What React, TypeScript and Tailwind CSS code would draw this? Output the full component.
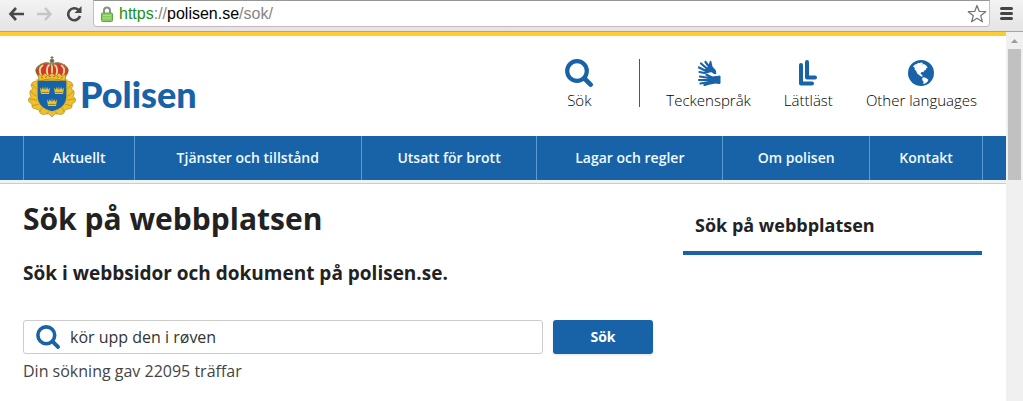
import { useState, type ReactNode } from "react";

function SearchIcon({ className }: { className: string }) {
  return (
    <svg viewBox="0 0 28 28" className={className} fill="none" stroke="#1862a8" aria-hidden="true">
      <circle cx="12" cy="12" r="9.8" strokeWidth="4.2" />
      <path d="M19.5 19.5 25.6 25.6" strokeWidth="4.6" strokeLinecap="round" />
    </svg>
  );
}

function HandsIcon() {
  return (
    <svg viewBox="0 0 24 26" className="h-[26px] w-6" fill="none" stroke="#1862a8" strokeLinecap="round" strokeLinejoin="round" aria-hidden="true">
      <path d="M8.500 2 13 8M4 3.500 11 9.500M2 7.500 10 11.500M2.500 12 10 13.500" strokeWidth="2.200" />
      <path d="M13.500 1.500 14.800 7 18 10.500 18.500 13.500 12 12.500 9 13.500 8.500 10 12 7Z" fill="#1862a8" strokeWidth="1.600" />
      <path d="M9 15.200 14 13.800 17 16" stroke="#fff" strokeWidth="3.200" />
      <path d="M9.500 14.800 15 17.500M3 16.500 12 18M2 20 12 20M3.500 23.500 12 22M7.500 25 14 23" strokeWidth="2.200" />
      <path d="M12 16.800 16 17 23 16V23.500L18 23 13 24 11.500 22Z" fill="#1862a8" strokeWidth="1" />
    </svg>
  );
}

function EasyReadIcon() {
  return (
    <svg viewBox="0 0 20 28" className="h-7 w-5" fill="none" stroke="#1862a8" strokeWidth="4" strokeLinejoin="round" strokeLinecap="round" aria-hidden="true">
      <path d="M3 6V24.500H14" />
      <path d="M9 3V18.500H17" />
    </svg>
  );
}

function GlobeIcon() {
  return (
    <svg viewBox="0 0 26 26" className="size-[26px]" aria-hidden="true">
      <circle cx="13" cy="13" r="13" fill="#1862a8" />
      <g fill="#fff">
        <path d="M5 6.5 7 4.5 9 4 10 2.8 12 3.2 13 2.2 15 3.2 14.2 4.4 16 4 18.2 5.4 19.8 7.8 18.5 8 17.8 10 16.2 10.6 15.3 12.6 14.8 11.8 13 12.4 12.6 14 14 14.8 14.8 16.4 13.2 16.6 11 15 9.2 13.6 8.2 11 6.6 9.6 6.8 7.8Z" />
        <path d="M14.4 17.8 16 17.2 18 18 20.4 19.8 19.5 21.8 17.2 23.4 15.2 24 15.6 21.8 14.2 20Z" />
      </g>
    </svg>
  );
}

function SmallCrown({ x, y }: { x: number; y: number }) {
  return (
    <g transform={`translate(${x} ${y})`} fill="#f3c52c">
      <path d="M0 1.5 2 4 2.6 1 4.3 4 5 0 5.7 4 7.4 1 8 4 10 1.5 9 8H1Z" />
      <path d="M1.3 6.4H8.7" stroke="#806b22" strokeWidth=".8" />
    </g>
  );
}

function Crest() {
  return (
    <svg viewBox="0 0 48 62" className="h-[62px] w-12" aria-hidden="true">
      <g fill="#f0c02a" stroke="#a5842a" strokeWidth=".6" strokeLinejoin="round">
        <path d="M10 25Q3 25 3 30L5 33Q1 34 2 38L3 41Q-1 42 1 46L4 48Q3 53 8 53L11 54Q12 60 18 58L21 58 24 61 27 58 30 58Q36 60 37 54L40 53Q45 53 44 48L47 46Q49 42 45 41L46 38Q47 34 43 33L45 30Q45 25 38 25Z" />
        <path d="M4 28 9 34M2 35 8 40M1 43 9 44M4 50 11 48M12 56 14 51M19 58 21 55M44 28 39 34M46 35 40 40M47 43 39 44M44 50 37 48M36 56 34 51M29 58 27 55" fill="none" />
      </g>
      <path d="M9 24H39V40Q39 52 24 56 9 52 9 40Z" fill="#1763a9" stroke="#e8b926" strokeWidth="1.300" />
      <SmallCrown x={12} y={30} />
      <SmallCrown x={26} y={30} />
      <SmallCrown x={19} y={42} />
      <path d="M11 21Q4 13 12 9 18 5 24 8 30 5 36 9 44 13 37 21Z" fill="#cf3a30" stroke="#866b27" strokeWidth=".8" />
      <path d="M14 21Q9 13 15 9M20 20Q17 12 22 8M28 20Q31 12 26 8M34 21Q39 13 33 9M24 8V21" fill="none" stroke="#f4d98b" strokeWidth="1.800" />
      <path d="M9 13 12 9 18 7 24 9 30 7 36 9 39 13" fill="none" stroke="#8c8158" strokeWidth="2" strokeDasharray="1.500 1" />
      <path d="M10 18 14 20 17 17 20 20 24 17 28 20 31 17 34 20 38 18 37 25Q24 21 11 25Z" fill="#f2c02a" stroke="#8c6920" strokeWidth=".6" />
      <path d="M13 22Q24 19 35 22" fill="none" stroke="#a66d23" strokeWidth="1" strokeDasharray="2 2" />
      <circle cx="24" cy="5" r="2" fill="#3b6c9a" stroke="#a58427" strokeWidth=".8" />
      <path d="M24 0V4M22.500 1.500H25.500" stroke="#8b6f28" strokeWidth="1" />
    </svg>
  );
}

function BrowserBar() {
  return (
    <div className="flex h-8 items-start border-b border-[#a4a5ac] bg-gradient-to-b from-[#f3f3f3] to-[#e5e4e5] pl-2">
      <div className="flex h-7 items-center gap-[13px]">
        <button aria-label="Back" className="w-4">
          <svg viewBox="0 0 16 16" className="size-4" fill="none" stroke="#484848" strokeWidth="2.600"><path d="M8 2 2.500 8 8 14M2.500 8H16" /></svg>
        </button>
        <button aria-label="Forward" className="w-4">
          <svg viewBox="0 0 16 16" className="size-4" fill="none" stroke="#c5c5c5" strokeWidth="2.400"><path d="M8 2 13.500 8 8 14M13.500 8H0" /></svg>
        </button>
        <button aria-label="Reload" className="w-4">
          <svg viewBox="0 0 16 16" className="size-4" fill="none" stroke="#484848" strokeWidth="2.600"><path d="M12.500 4A6 6 0 1 0 14 10" /><path d="M15.500 0V7H8.500Z" fill="#484848" stroke="none" /></svg>
        </button>
      </div>
      <div className="ml-[11px] flex h-[27px] flex-1 items-center rounded-b-sm border border-t-[#969696] border-x-[#c2bdc0] border-b-[#c9b6bf] bg-white pl-[7px] pr-0.5">
        <svg viewBox="0 0 12 16" className="h-4 w-3" aria-hidden="true">
          <path d="M3 8V4.500Q3 1.500 6 1.500T9 4.500V8" fill="none" stroke="#8d8d8d" strokeWidth="2" />
          <rect x=".5" y="7" width="11" height="8.500" rx="1" fill="#89cd62" stroke="#62a544" />
          <path d="M2 9.500H10M2 12H10" stroke="#a9df86" />
        </svg>
        <a href="https://polisen.se/sok/" className="ml-1.5 flex-1 font-['Liberation_Sans',sans-serif] text-base leading-6 text-[#858585]">
          <span className="text-[#16911b]">https</span>://<span className="text-black">polisen.se</span>/sok/
        </a>
        <button aria-label="Bookmark this page">
          <svg viewBox="0 0 20 20" className="size-5" fill="#fff" stroke="#777" strokeWidth="1.300" strokeLinejoin="round"><path d="M10 1.500 12.300 7.400 18.700 7.700 13.700 11.700 15.400 17.800 10 14.300 4.600 17.800 6.300 11.700 1.300 7.700 7.700 7.400Z" /></svg>
        </button>
      </div>
      <button aria-label="Menu" className="ml-2.5 mr-2.5 mt-1.5">
        <svg viewBox="0 0 13 14" className="h-3.5 w-[13px]" stroke="#454347" strokeWidth="3" strokeLinecap="round"><path d="M1.500 2.500H11.500M1.500 7.500H11.500M1.500 12.500H11.500" /></svg>
      </button>
    </div>
  );
}

function Tool({ label, children }: { label: string; children: ReactNode }) {
  return (
    <a href="#" className="flex flex-col items-center text-[15px] font-light leading-5 text-black">
      <span className="flex h-[34px] items-center">{children}</span>
      {label}
    </a>
  );
}

const sections = ["Aktuellt", "Tjänster och tillstånd", "Utsatt för brott", "Lagar och regler", "Om polisen", "Kontakt"];

export default function App() {
  const [query, setQuery] = useState("kör upp den i røven");
  return (
    <div className="flex h-screen flex-col overflow-hidden bg-white font-['Open_Sans',sans-serif] text-[#222]">
      <BrowserBar />
      <div className="flex min-h-0 flex-1">
        <div className="min-w-0 flex-1 border-t-4 border-[#fecb30]">
          <header className="flex h-[100px] items-start justify-between pl-7 pr-[29px] pt-5">
            <a href="#" className="flex items-center gap-1 font-['Lato',sans-serif] text-[36px] font-black leading-10 text-[#1862a8]">
              <Crest />
              <span className="pt-3.5">Polisen</span>
            </a>
            <div className="flex items-start">
              <Tool label="Sök"><SearchIcon className="size-7" /></Tool>
              <div className="ml-[46px] mr-[26px] mt-[3px] h-12 w-px bg-[#1862a8]" />
              <nav aria-label="Verktyg" className="flex gap-[33px]">
                <Tool label="Teckenspråk"><HandsIcon /></Tool>
                <Tool label="Lättläst"><EasyReadIcon /></Tool>
                <Tool label="Other languages"><GlobeIcon /></Tool>
              </nav>
            </div>
          </header>
          <div className="border-b border-[#c9cdcd] bg-[#f0f2f2] pb-[3px]">
            <nav aria-label="Huvudmeny" className="bg-[#1862a8] pl-[23px] pr-[23px]">
              <ul className="grid grid-cols-[111fr_227fr_176fr_186fr_147fr_113fr] border-r border-[#5d9bd1]">
                {sections.map((section) => (
                  <li key={section} className="border-l border-[#5d9bd1]">
                    <a href="#" className="block whitespace-nowrap text-center text-sm font-semibold leading-[44px] text-[#f0fbff]">{section}</a>
                  </li>
                ))}
              </ul>
            </nav>
          </div>
          <div className="flex items-start gap-[30px] pl-[23px] pr-6">
            <main className="flex-1 pt-[13px]">
              <h1 className="text-[30px] font-bold leading-[44px]">Sök på webbplatsen</h1>
              <h2 className="mt-5 text-[19px] font-bold leading-6">Sök i webbsidor och dokument på polisen.se.</h2>
              <form className="mt-[35px] flex gap-2.5" onSubmit={(e) => e.preventDefault()}>
                <label className="flex h-[34px] flex-1 items-center gap-2.5 rounded-[3px] border border-[#ccc] pl-3">
                  <SearchIcon className="size-6" />
                  <input aria-label="Sök på webbplatsen" value={query} onChange={(e) => setQuery(e.target.value)} className="min-w-0 flex-1 text-base text-[#333] outline-none" />
                </label>
                <button className="h-[34px] w-[100px] rounded-[3px] bg-[#1862a8] text-sm font-bold text-white shadow-sm">Sök</button>
              </form>
              <p className="mt-[5px] text-base leading-6 text-[#444]">Din sökning gav 22095 träffar</p>
            </main>
            <aside className="w-[299px] border-b-4 border-[#1862a8] px-3 pb-3 pt-[27px]">
              <h2 className="text-lg font-bold leading-7">Sök på webbplatsen</h2>
            </aside>
          </div>
        </div>
        <div className="flex w-[17px] flex-col items-center bg-[#f0f0f0]" aria-hidden="true">
          <svg viewBox="0 0 7 4" className="mt-[7px] h-1 w-[7px] shrink-0" fill="#9b9b9b"><path d="M3.500 0 7 4H0Z" /></svg>
          <div className="mt-[6px] h-[131px] w-[13px] bg-[#c1c1c1]" />
        </div>
      </div>
    </div>
  );
}
